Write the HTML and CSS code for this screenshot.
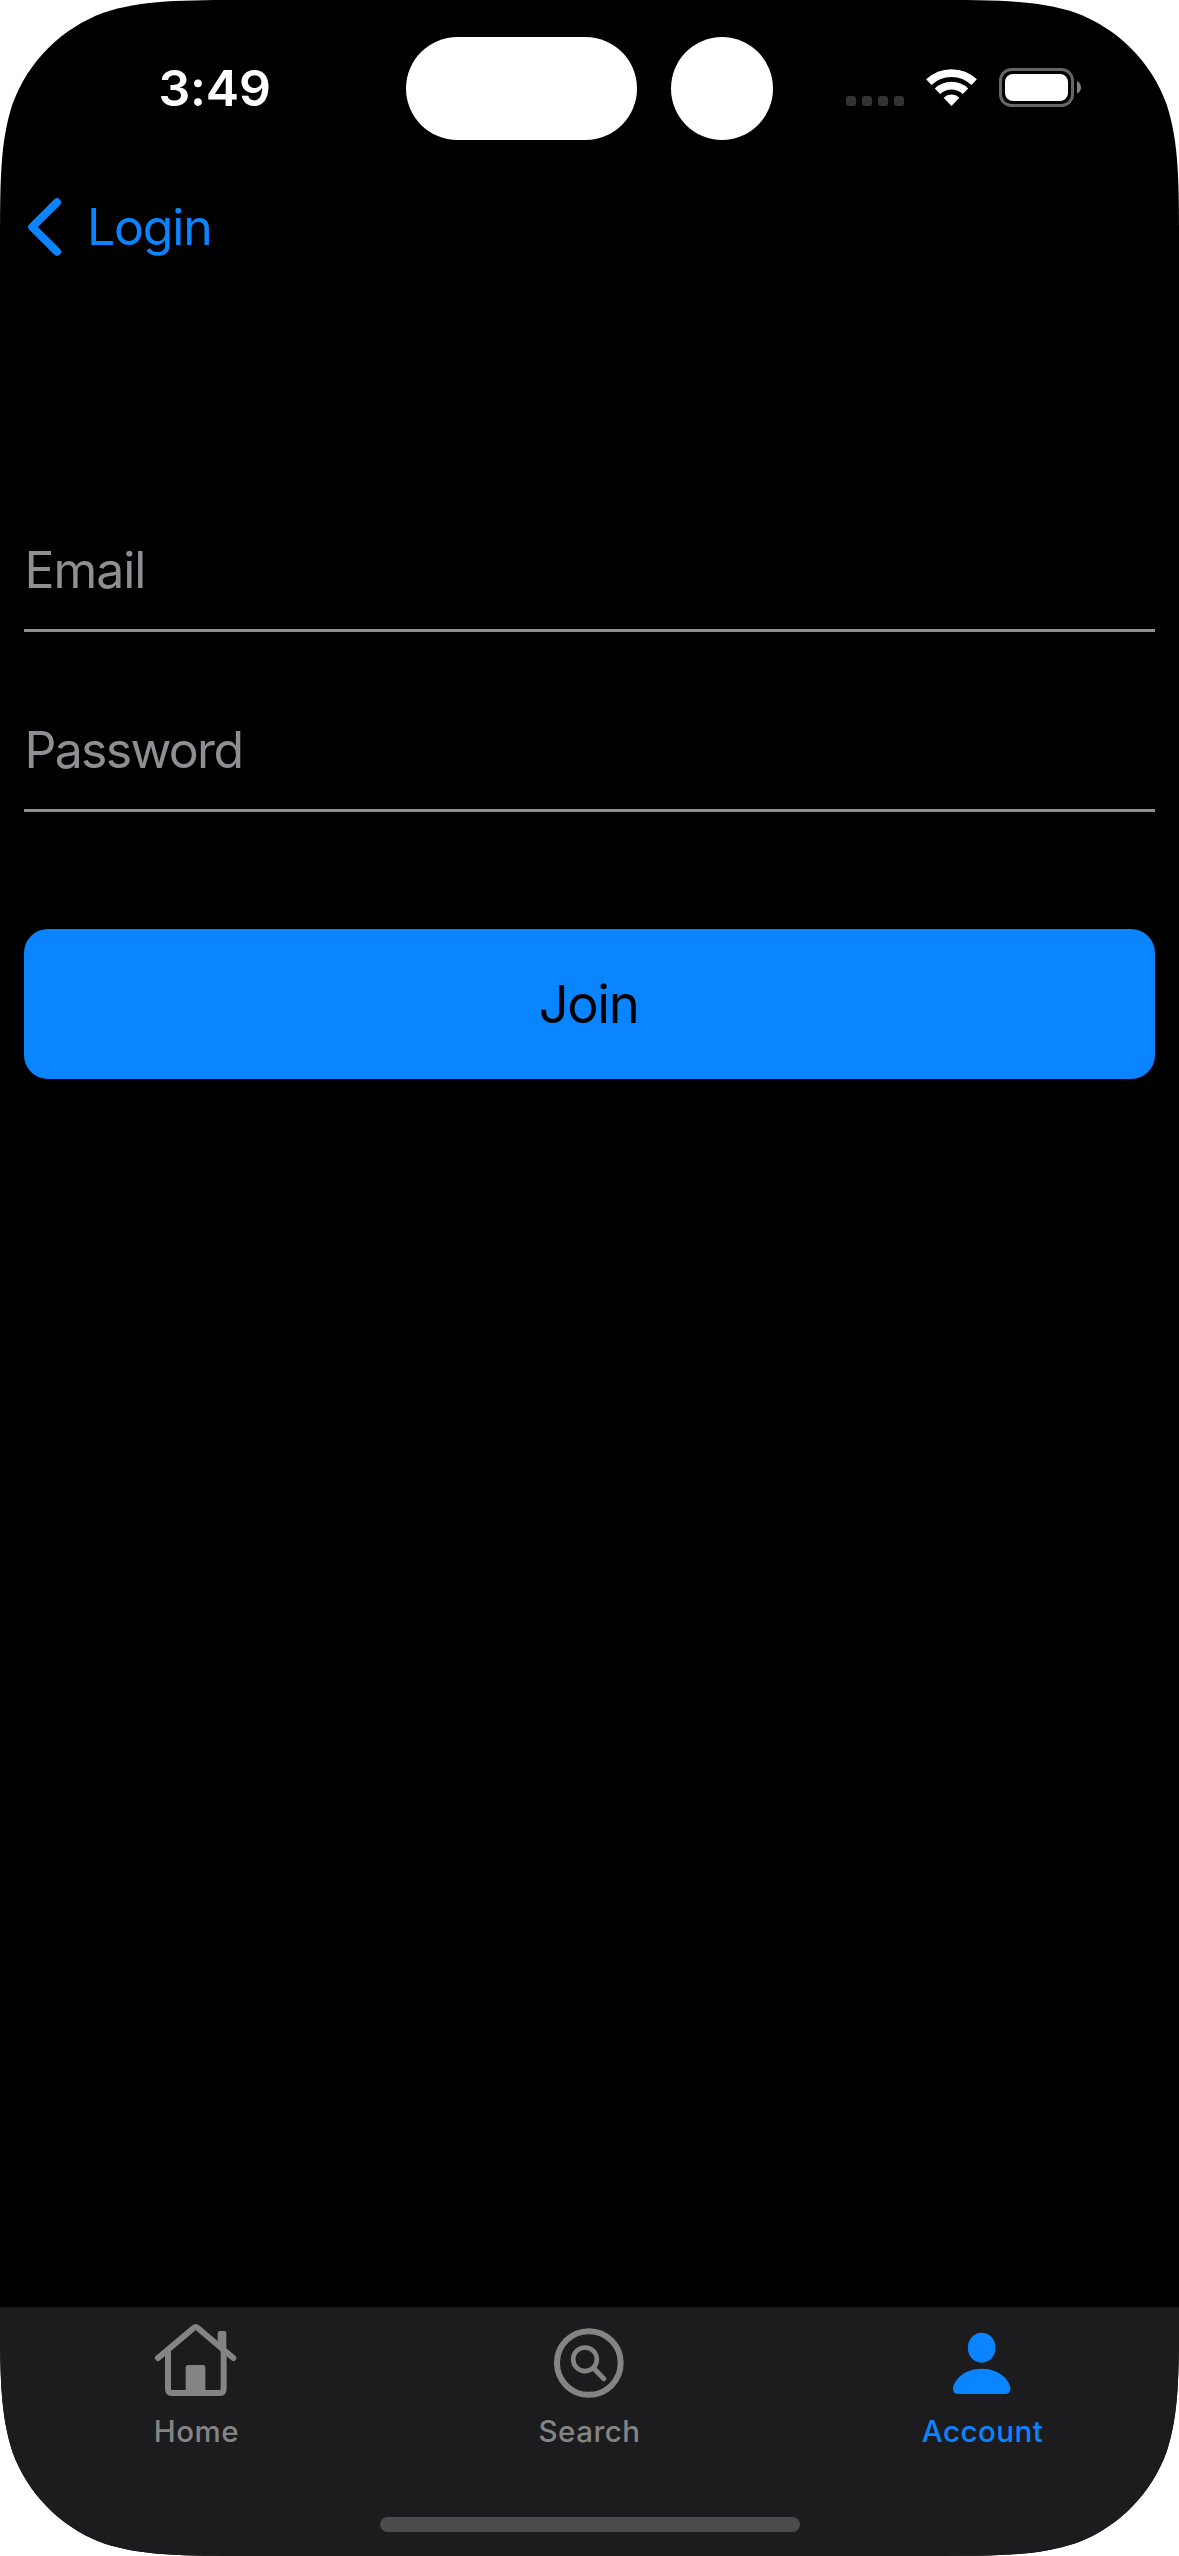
FILE: index.html
```html
<!DOCTYPE html>
<html lang="en">
<head>
<meta charset="utf-8">
<title>Join</title>
<link rel="stylesheet" href="styles.css">
</head>
<body>
<div class="screen">
  <header class="status">
    <span class="time">3:49</span>
    <span class="island"></span>
    <span class="camera"></span>
    <svg class="status-icons" width="235" height="39" viewBox="0 0 235 39">
      <g fill="#333">
        <rect x="0" y="28" width="10" height="10" rx="3"/>
        <rect x="16" y="28" width="10" height="10" rx="3"/>
        <rect x="32" y="28" width="10" height="10" rx="3"/>
        <rect x="48" y="28" width="10" height="10" rx="3"/>
      </g>
      <g fill="none" stroke="#fff" stroke-width="7.8">
        <path d="M82.8 14.1A33 33 0 0 1 128.2 14.1"/>
        <path d="M91.5 23.3A20.3 20.3 0 0 1 119.5 23.3"/>
      </g>
      <path fill="#fff" d="M105.5 38L97.6 29.7A11.6 11.6 0 0 1 113.4 29.7Z"/>
      <rect x="154.5" y="1.5" width="72" height="36" rx="11" fill="none" stroke="#666" stroke-width="3"/>
      <rect x="159" y="6" width="63" height="27" rx="8" fill="#fff"/>
      <path fill="#808080" d="M231 13.3C236.3 15.5 236.3 23.5 231 25.7Z"/>
    </svg>
  </header>
  <nav class="nav">
    <svg width="36" height="58" viewBox="0 0 36 58">
      <path d="M30 4.3L5.2 29L30 53.7" fill="none" stroke="#0a84ff" stroke-width="8" stroke-linecap="round" stroke-linejoin="round"/>
    </svg>
    <span class="back">Login</span>
  </nav>
  <main class="form">
    <div class="field"><span class="email">Email</span></div>
    <div class="field"><span class="password">Password</span></div>
    <div class="button"><span class="join">Join</span></div>
  </main>
  <footer class="tabs">
    <div class="tab">
      <svg width="91" height="76" viewBox="453 96 273 228">
        <g fill="none" stroke="#848484" stroke-width="18" stroke-linecap="round" stroke-linejoin="round">
          <path d="M474 204L581 114Q587 109 593 114L700 204"/>
          <path stroke-linecap="butt" d="M504 180V296Q504 309 517 309H658Q671 309 671 296V180"/>
        </g>
        <path fill="#848484" d="M653 168V129Q653 123 659 123H673Q679 123 679 129V188Z"/>
        <path fill="#848484" d="M557 312V232Q557 225 564 225H609Q616 225 616 232V312Z"/>
      </svg>
      <span class="home">Home</span>
    </div>
    <div class="tab">
      <svg width="91" height="76" viewBox="132 66 273 228">
        <g fill="none" stroke="#848484" stroke-linecap="round">
          <circle cx="266.5" cy="189" r="95.5" stroke-width="18"/>
          <circle cx="255" cy="178" r="35.5" stroke-width="14"/>
          <path d="M281 205L311.5 236" stroke-width="15"/>
        </g>
      </svg>
      <span class="search">Search</span>
    </div>
    <div class="tab active">
      <svg width="91" height="76" viewBox="111 66 273 228">
        <g fill="#0a84ff">
          <ellipse cx="245" cy="143" rx="41.5" ry="45"/>
          <path d="M176 282Q159 282 159 266C159 246 187 206 245 206C303 206 331 246 331 266Q331 282 314 282Z"/>
        </g>
      </svg>
      <span class="account">Account</span>
    </div>
    <span class="indicator"></span>
  </footer>
</div>
</body>
</html>
```
FILE: styles.css
```css
* { box-sizing: border-box; }
body {
  margin: 0;
  background: #fff;
  font-family: Inter, "Liberation Sans", sans-serif;
}
svg { display: block; flex: none; }
span { white-space: nowrap; }

/* Continuous (superelliptical) display corners */
.screen {
  width: 1179px;
  height: 2556px;
  display: flex;
  flex-direction: column;
  background: #000;
  clip-path: path("M252 0C179.600 0 143.300 0 104.200 12.400C61.500 27.900 27.900 61.500 12.400 104.200C0 143.300 0 179.600 0 252V2304C0 2376.400 0 2412.700 12.400 2451.800C27.900 2494.500 61.500 2528.100 104.200 2543.600C143.300 2556 179.600 2556 252 2556H927C999.400 2556 1035.700 2556 1074.800 2543.600C1117.500 2528.100 1151.100 2494.500 1166.600 2451.800C1179 2412.700 1179 2376.400 1179 2304V252C1179 179.600 1179 143.300 1166.600 104.200C1151.100 61.500 1117.500 27.900 1074.800 12.400C1035.700 0 999.400 0 927 0Z");
}

.status {
  height: 177px;
  display: flex;
  align-items: center;
}
.time {
  width: 247px;
  margin-left: 158.5px;
  margin-top: -2px;
  color: #fff;
  font-size: 50px;
  font-weight: 560;
  letter-spacing: -0.2px;
}
.island { width: 231px; height: 103px; border-radius: 52px; background: #fff; }
.camera { width: 102px; height: 103px; margin: 0 0.5px 0 34.5px; border-radius: 50%; background: #fff; }
.status-icons { margin-left: 72px; margin-top: -2px; }

.nav {
  height: 100px;
  padding-left: 27px;
  display: flex;
  align-items: center;
}
.back {
  margin-left: 24px;
  color: #0a84ff;
  font-size: 50px;
  letter-spacing: -1.2px;
}

.form {
  flex: 1;
  padding: 175px 24px 0;
  display: flex;
  flex-direction: column;
}
.field {
  height: 180px;
  padding: 0 0 29px 0.5px;
  display: flex;
  align-items: flex-end;
  border-bottom: 3px solid #8e8e93;
  color: #8e8e93;
  font-size: 50px;
}
.email { letter-spacing: -1.1px; }
.password { letter-spacing: -1.7px; }
.button {
  height: 150px;
  margin-top: 117px;
  padding-right: 2px;
  display: flex;
  align-items: center;
  justify-content: center;
  border-radius: 24px;
  background: #0a84ff;
  color: #000;
  font-size: 52.5px;
  letter-spacing: -1.4px;
}

.tabs {
  height: 249px;
  padding-top: 15px;
  display: grid;
  grid-template-columns: repeat(3, 1fr);
  grid-template-rows: 195px 15px;
  background: #1c1c1e;
}
.tab {
  display: flex;
  flex-direction: column;
  align-items: center;
  gap: 15px;
  color: #848484;
  font-size: 29.5px;
  font-weight: 450;
  letter-spacing: 0.5px;
}
.active { color: #0a84ff; }
.indicator {
  grid-column: 1 / -1;
  justify-self: center;
  width: 420px;
  height: 15px;
  border-radius: 8px;
  background: #4b4b4b;
}
```
